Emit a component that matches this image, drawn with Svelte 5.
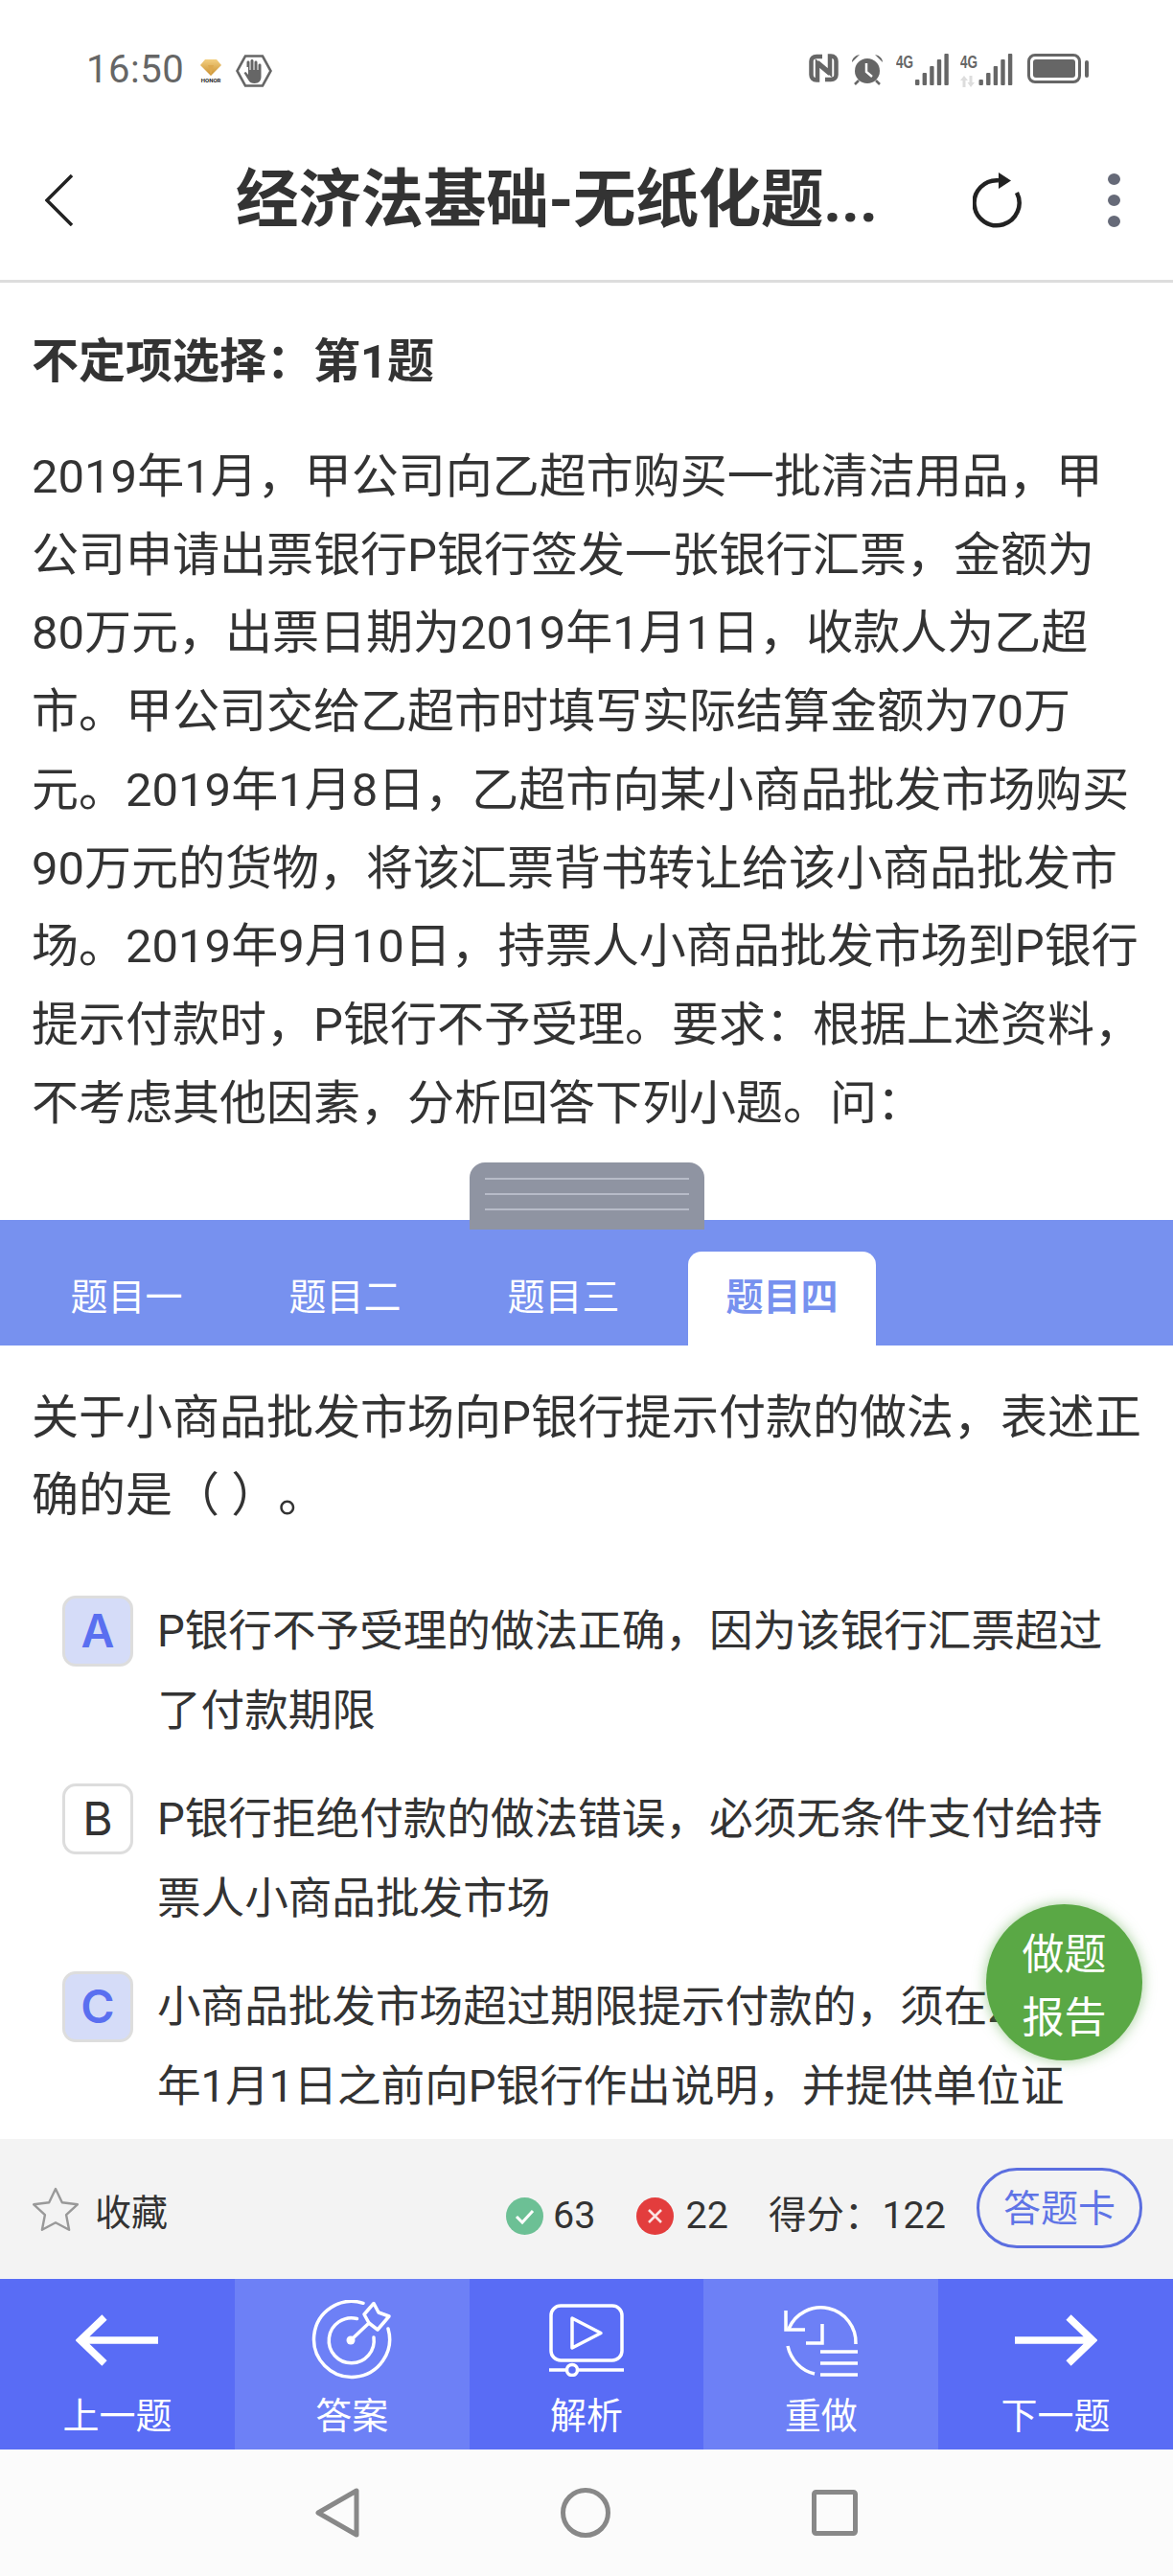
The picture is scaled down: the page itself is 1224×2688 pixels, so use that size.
<script>
  // 做题页面: 题干 + 小题选项 + 底部操作栏
  const passage = [
    '2019年1月，甲公司向乙超市购买一批清洁用品，甲',
    '公司申请出票银行P银行签发一张银行汇票，金额为',
    '80万元，出票日期为2019年1月1日，收款人为乙超',
    '市。甲公司交给乙超市时填写实际结算金额为70万',
    '元。2019年1月8日，乙超市向某小商品批发市场购买',
    '90万元的货物，将该汇票背书转让给该小商品批发市',
    '场。2019年9月10日，持票人小商品批发市场到P银行',
    '提示付款时，P银行不予受理。要求：根据上述资料，',
    '不考虑其他因素，分析回答下列小题。问：'
  ];

  const tabs = ['题目一', '题目二', '题目三', '题目四'];
  let activeTab = $state(3);

  const options = [
    { key: 'A', picked: true, lines: ['P银行不予受理的做法正确，因为该银行汇票超过', '了付款期限'] },
    { key: 'B', picked: false, lines: ['P银行拒绝付款的做法错误，必须无条件支付给持', '票人小商品批发市场'] },
    { key: 'C', picked: true, lines: ['小商品批发市场超过期限提示付款的，须在2021', '年1月1日之前向P银行作出说明，并提供单位证'] }
  ];

  const signalBars = [6, 13, 20, 27, 33];
</script>

{#snippet bars(x)}
  {#each signalBars as h, i}
    <rect x={x + i * 7.6} y={33 - h} width="4.4" height={h} rx="1" />
  {/each}
{/snippet}

<div class="screen">
  <div class="status">
    <span class="time">16:50</span>
    <div class="honor">
      <svg width="22" height="17" viewBox="0 0 22 17">
        <defs>
          <linearGradient id="gold" x1="0" y1="0" x2="0" y2="1">
            <stop offset="0" stop-color="#f3cf80" />
            <stop offset="1" stop-color="#c98f2f" />
          </linearGradient>
        </defs>
        <polygon points="5,0 17,0 22,6 11,17 0,6" fill="url(#gold)" />
        <polygon points="8,6 14,6 11,17" fill="#dda94e" />
      </svg>
      <span class="honor-text">HONOR</span>
    </div>
    <svg class="hand" width="38" height="34" viewBox="0 0 38 34">
      <polygon points="10,1.5 28,1.5 36.5,17 28,32.5 10,32.5 1.5,17" fill="none" stroke="#666" stroke-width="2.6" />
      <path d="M13 13v8l-2.500-3-2 1 5 8c1 2 3 3 6 3 5 0 7-3 7-7V11c0-2-3-2-3 0v5h-1V8c0-2-3-2-3 0v8h-1V6.500c0-2-3-2-3 0V16h-1V8c0-2-3-2-3 0v5z" fill="#666" />
    </svg>

    <div class="status-right">
      <svg width="31" height="30" viewBox="0 0 31 30" fill="none" stroke="#666" stroke-width="4.500">
        <path d="M14 3H8C4.500 3 2.500 5 2.500 8v14c0 3 2 5.500 5.500 5.500h1L9 10l13 11" />
        <path d="M17 27h6c3.500 0 5.500-2 5.500-5V8c0-3-2-5.500-5.500-5.500h-1L22 20 9 9" />
      </svg>
      <svg width="34" height="33" viewBox="0 0 34 33">
        <circle cx="17" cy="18" r="13" fill="#666" />
        <path d="M16 10v9l6 5" fill="none" stroke="#fff" stroke-width="2.500" />
        <path d="M1 9c0-4 3-7 8-8zM33 9c0-4-3-7-8-8z" fill="#666" />
        <path d="M8 28l-4 4M26 28l4 4" stroke="#666" stroke-width="2.500" />
      </svg>
      <div class="signal">
        <span class="net">4G</span>
        <svg width="35" height="33" viewBox="0 0 35 33" fill="#666">{@render bars(0)}</svg>
      </div>
      <div class="signal second">
        <span class="net">4G</span>
        <svg class="arrows" width="15" height="12" viewBox="0 0 15 12" fill="#ddd">
          <path d="M4 0L8 5H5.500v7h-3V5H0zM11 12L7.500 7H9.500V0h3v7H15z" />
        </svg>
        <svg width="36" height="33" viewBox="0 0 35 33" fill="#666">{@render bars(0)}</svg>
      </div>
      <div class="battery">
        <div class="battery-body"><div class="battery-fill"></div></div>
        <div class="battery-cap"></div>
      </div>
    </div>
  </div>

  <header class="topbar">
    <svg class="back" width="29" height="54" viewBox="0 0 29 54" fill="none" stroke="#222" stroke-width="3.500">
      <path d="M28 1L2 27l26 26" />
    </svg>
    <h1>经济法基础-无纸化题...</h1>
    <svg class="refresh" width="52" height="58" viewBox="0 0 52 58" fill="none">
      <path d="M27 8.300A23.500 23.500 0 1 0 46 21" stroke="#222" stroke-width="4.500" />
      <path d="M27 0l13 8.500L27 17z" fill="#222" />
    </svg>
    <div class="kebab"><i></i><i></i><i></i></div>
  </header>

  <section class="intro">
    <div class="heading">不定项选择：第1题</div>
    <div class="passage">
      {#each passage as line}
        <div class="line">{line}</div>
      {/each}
    </div>
  </section>

  <nav class="tabs">
    {#each tabs as tab, i}
      <button class="tab" class:active={activeTab === i} onclick={() => (activeTab = i)}>{tab}</button>
    {/each}
  </nav>

  <div class="handle"><i></i><i></i><i></i></div>

  <main class="question">
    <div class="stem">
      <div>关于小商品批发市场向P银行提示付款的做法，表述正</div>
      <div>确的是（ ）。</div>
    </div>
    <div class="options">
      {#each options as opt}
        <div class="option">
          <span class="letter" class:picked={opt.picked}>{opt.key}</span>
          <div class="option-text">
            {#each opt.lines as line}
              <div class="line">{line}</div>
            {/each}
          </div>
        </div>
      {/each}
    </div>
  </main>

  <div class="report">做题<br />报告</div>

  <div class="summary">
    <div class="fav">
      <svg width="50" height="46" viewBox="0 0 50 46" fill="none" stroke="#999" stroke-width="2.400" stroke-linejoin="round">
        <path d="M25 2l6.800 14.300 16 2-11.700 10.900 3 15.600L25 37.200 10.900 44.800l3-15.600L2.200 18.300l16-2z" />
      </svg>
      <span>收藏</span>
    </div>
    <div class="stats">
      <svg width="39" height="39" viewBox="0 0 39 39">
        <circle cx="19.500" cy="19.500" r="19.500" fill="#6cc095" />
        <path d="M11 20l6 6 11-12" fill="none" stroke="#fff" stroke-width="3" />
      </svg>
      <span class="num right">63</span>
      <svg width="39" height="39" viewBox="0 0 39 39">
        <circle cx="19.500" cy="19.500" r="19.500" fill="#e33d3d" />
        <path d="M13 13l13 13M26 13L13 26" fill="none" stroke="#fff" stroke-width="2.600" opacity="0.85" />
      </svg>
      <span class="num wrong">22</span>
      <span class="score">得分：122</span>
    </div>
    <button class="card-btn">答题卡</button>
  </div>

  <div class="actions">
    <button class="action">
      <span class="action-icon">
        <svg width="86" height="54" viewBox="0 0 86 54" fill="none" stroke="#fff" stroke-width="7.500">
          <path d="M30 3L5 27l25 24M5 27h81" />
        </svg>
      </span>
      <span>上一题</span>
    </button>
    <button class="action light">
      <span class="action-icon">
        <svg width="84" height="84" viewBox="0 0 84 84" fill="none" stroke="#fff" stroke-width="3.500" stroke-linecap="round" stroke-linejoin="round">
          <path d="M54 3.300A39.500 39.500 0 1 0 80 30" />
          <path d="M47.500 19.500A23.500 23.500 0 1 0 65 39" />
          <path d="M41 42L60 24" />
          <path d="M55 15L65 3.500l5 9.500 11 4-12 14-9-7z" />
          <circle cx="41" cy="42" r="4.500" fill="#fff" stroke="none" />
        </svg>
      </span>
      <span>答案</span>
    </button>
    <button class="action">
      <span class="action-icon">
        <svg width="78" height="76" viewBox="0 0 78 76" fill="none" stroke="#fff" stroke-width="3.500" stroke-linejoin="round">
          <rect x="2" y="2" width="74" height="57" rx="10" />
          <path d="M24 15l30 15.500L24 46z" />
          <path d="M0 69h18M30 69h48" />
          <circle cx="24" cy="69" r="5.500" />
        </svg>
      </span>
      <span>解析</span>
    </button>
    <button class="action light">
      <span class="action-icon">
        <svg width="78" height="76" viewBox="0 0 78 76" fill="none" stroke="#fff" stroke-width="3.500">
          <path d="M5 26A36.500 36.500 0 0 1 75 42" />
          <path d="M2 7v20h20" />
          <path d="M40 21v20H23" />
          <path d="M4 44c3 14 14 26 28 29" />
          <path d="M38 50h39M38 62h39M38 74h39" />
        </svg>
      </span>
      <span>重做</span>
    </button>
    <button class="action">
      <span class="action-icon">
        <svg width="86" height="54" viewBox="0 0 86 54" fill="none" stroke="#fff" stroke-width="7.500">
          <path d="M56 3l25 24-25 24M81 27H0" />
        </svg>
      </span>
      <span>下一题</span>
    </button>
  </div>

  <div class="sysnav">
    <svg width="46" height="52" viewBox="0 0 46 52" fill="none" stroke="#888" stroke-width="5" stroke-linejoin="round">
      <path d="M43 3v46L3 26z" />
    </svg>
    <svg width="52" height="52" viewBox="0 0 52 52" fill="none" stroke="#888" stroke-width="5">
      <circle cx="26" cy="26" r="23.500" />
    </svg>
    <svg width="48" height="48" viewBox="0 0 48 48" fill="none" stroke="#888" stroke-width="5" stroke-linejoin="round">
      <rect x="2.500" y="2.500" width="43" height="43" rx="2" />
    </svg>
  </div>
</div>

<style>
  :global(body) {
    margin: 0;
    background: #fff;
  }

  .screen {
    position: relative;
    width: 1224px;
    height: 2688px;
    display: flex;
    flex-direction: column;
    overflow: hidden;
    font-family: Roboto, "Noto Sans CJK SC", sans-serif;
    color: #333;
    text-spacing-trim: space-all;
  }

  button {
    font: inherit;
    border: none;
    padding: 0;
    background: none;
    color: inherit;
  }

  .status {
    flex: none;
    height: 100px;
    box-sizing: border-box;
    padding: 55px 88px 0 90px;
    display: flex;
    align-items: flex-start;
  }

  .time {
    font-size: 40px;
    line-height: 36px;
    color: #666;
    letter-spacing: 0.5px;
  }

  .honor {
    margin-left: 15px;
    margin-top: 7px;
    width: 26px;
    display: flex;
    flex-direction: column;
    align-items: center;
  }

  .honor-text {
    font-size: 6px;
    line-height: 7px;
    margin-top: 1px;
    font-weight: 700;
    color: #222;
  }

  .hand {
    margin-left: 13px;
    margin-top: 2px;
  }

  .status-right {
    margin-left: auto;
    display: flex;
    align-items: flex-start;
    gap: 13px;
    margin-top: 1px;
  }

  .signal {
    position: relative;
    width: 55px;
    height: 33px;
    display: flex;
    justify-content: flex-end;
  }

  .signal.second {
    width: 55px;
    margin-left: -1px;
  }

  .net {
    position: absolute;
    left: 0;
    top: 1px;
    font-size: 18px;
    line-height: 17px;
    font-weight: 700;
    color: #666;
    font-family: "Liberation Sans", sans-serif;
    transform: scaleX(0.75);
    transform-origin: left;
  }

  .arrows {
    position: absolute;
    left: 0;
    bottom: -2px;
  }

  .battery {
    display: flex;
    align-items: center;
    gap: 4px;
    height: 31px;
    margin-left: 2px;
  }

  .battery-body {
    box-sizing: border-box;
    width: 56px;
    height: 31px;
    border: 3px solid #666;
    border-radius: 8px;
    padding: 3px;
  }

  .battery-fill {
    height: 100%;
    background: #666;
    border-radius: 3px;
  }

  .battery-cap {
    width: 4px;
    height: 18px;
    background: #666;
    border-radius: 2px;
  }

  .topbar {
    flex: none;
    height: 195px;
    box-sizing: border-box;
    padding: 25px 55px 0 47px;
    border-bottom: 3px solid #ddd;
    display: flex;
    align-items: center;
  }

  .topbar h1 {
    margin: 0 0 0 170px;
    font-size: 65.5px;
    font-weight: 700;
    line-height: 80px;
    color: #333;
    white-space: nowrap;
    width: 667px;
    letter-spacing: -0.2px;
  }

  .refresh {
    margin-left: 102px;
  }

  .kebab {
    margin-left: 89px;
    display: flex;
    flex-direction: column;
    gap: 10px;
  }

  .kebab i {
    display: block;
    width: 13px;
    height: 12px;
    border-radius: 50%;
    background: #666a78;
  }

  .intro {
    flex: none;
    height: 978px;
    box-sizing: border-box;
    padding: 43px 0 0 33px;
    font-size: 49px;
  }

  .heading {
    font-weight: 700;
    line-height: 80px;
  }

  .passage {
    margin-top: 39px;
    line-height: 81.7px;
    white-space: nowrap;
  }

  .tabs {
    flex: none;
    height: 131px;
    box-sizing: border-box;
    padding: 33px 0 0 34px;
    background: #7791ef;
    display: flex;
    gap: 32px;
  }

  .tab {
    width: 196px;
    height: 98px;
    border-radius: 14px 14px 0 0;
    font-size: 39px;
    color: #fff;
    padding-bottom: 10px;
  }

  .tab.active {
    background: #fff;
    color: #7791ef;
    font-weight: 700;
  }

  .handle {
    position: absolute;
    left: 490px;
    top: 1213px;
    width: 245px;
    height: 70px;
    box-sizing: border-box;
    padding: 16px 16px 0;
    background: #8f94a2;
    border-radius: 16px 16px 0 0;
    display: flex;
    flex-direction: column;
    gap: 14px;
  }

  .handle i {
    display: block;
    height: 2px;
    background: #b7bbc8;
  }

  .question {
    flex: 1;
    min-height: 0;
    overflow: hidden;
    box-sizing: border-box;
    padding: 35px 0 0 33px;
    font-size: 49px;
    line-height: 81px;
    white-space: nowrap;
  }

  .options {
    margin-top: 60px;
    padding-left: 32px;
    display: flex;
    flex-direction: column;
    gap: 30px;
  }

  .option {
    display: flex;
    gap: 25px;
    font-size: 45.6px;
    line-height: 83px;
  }

  .letter {
    flex: none;
    box-sizing: border-box;
    width: 74px;
    height: 74px;
    margin-top: 4px;
    border: 3px solid #ddd;
    border-radius: 14px;
    display: flex;
    align-items: center;
    justify-content: center;
    font-size: 48px;
    line-height: 1;
    background: #fff;
    font-family: Inter, sans-serif;
  }

  .letter.picked {
    background: #d5dcf8;
    color: #5a6ff0;
    font-weight: 600;
  }

  .report {
    position: absolute;
    left: 1029px;
    top: 1987px;
    width: 163px;
    height: 163px;
    box-sizing: border-box;
    padding-top: 9px;
    border-radius: 50%;
    background: #5aa845;
    box-shadow: 0 0 14px rgba(90, 168, 69, 0.55);
    color: #fff;
    font-size: 44px;
    line-height: 66px;
    text-align: center;
    display: flex;
    align-items: center;
    justify-content: center;
  }

  .summary {
    flex: none;
    height: 146px;
    box-sizing: border-box;
    padding: 0 32px 0 33px;
    background: #f3f3f3;
    display: flex;
    align-items: center;
  }

  .fav {
    display: flex;
    align-items: center;
    gap: 16px;
    font-size: 38px;
  }

  .stats {
    margin-left: auto;
    display: flex;
    align-items: center;
    padding-top: 14px;
    font-size: 39.5px;
    line-height: 46px;
  }

  .num.right {
    margin-left: 10px;
    margin-right: 43px;
  }

  .num.wrong {
    margin-left: 12px;
    margin-right: 42px;
  }

  .card-btn {
    margin-left: 32px;
    box-sizing: border-box;
    width: 173px;
    height: 84px;
    border: 3px solid #5b6ee0;
    border-radius: 42px;
    color: #5f74e6;
    font-size: 39px;
    margin-bottom: 2px;
    padding-bottom: 6px;
  }

  .actions {
    flex: none;
    height: 178px;
    display: grid;
    grid-template-columns: repeat(5, 1fr);
    background: #596cf5;
  }

  .action {
    display: flex;
    flex-direction: column;
    align-items: center;
    justify-content: flex-start;
    padding-top: 19px;
    color: #fff;
    font-size: 38px;
    line-height: 44px;
  }

  .action.light {
    background: #6d80f6;
  }

  .action-icon {
    height: 90px;
    margin-bottom: 12px;
    display: flex;
    align-items: center;
  }

  .sysnav {
    flex: none;
    height: 132px;
    background: #fbfbfb;
    box-sizing: border-box;
    padding: 0 329px;
    display: flex;
    align-items: center;
    justify-content: space-between;
  }
</style>
